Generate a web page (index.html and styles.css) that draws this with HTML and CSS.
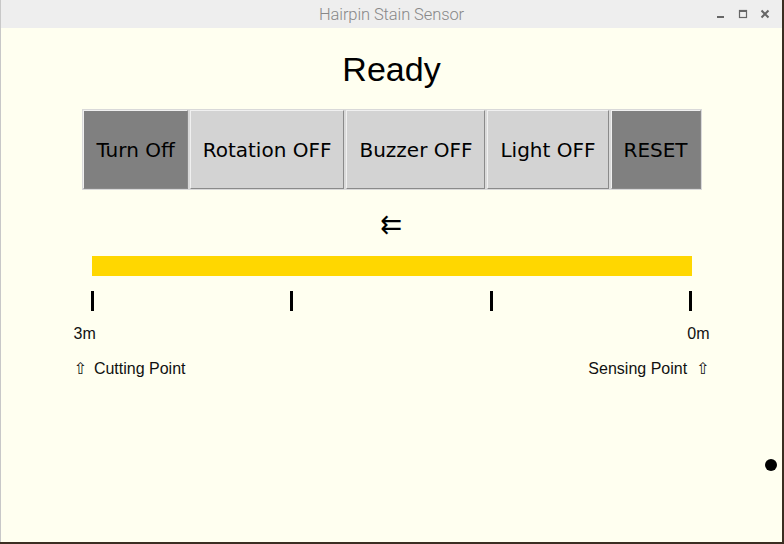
FILE: index.html
```html
<!DOCTYPE html>
<html>
<head>
<meta charset="utf-8">
<link rel="stylesheet" href="styles.css">
</head>
<body>
<div class="window">
  <div class="titlebar">
    <div class="title">Hairpin Stain Sensor</div>
    <div class="controls">
      <svg class="ctl" width="10" height="10" viewBox="0 0 10 10"><rect x="1" y="7" width="7" height="2" fill="#666"/></svg>
      <svg class="ctl" width="10" height="10" viewBox="0 0 10 10"><rect x="1.5" y="1.5" width="7" height="7" fill="none" stroke="#666" stroke-width="1.2"/><rect x="1" y="1" width="8" height="2" fill="#666"/></svg>
      <svg class="ctl" width="10" height="10" viewBox="0 0 10 10"><path d="M1.5 1.5 L8.5 8.5 M8.5 1.5 L1.5 8.5" stroke="#666" stroke-width="2"/></svg>
    </div>
  </div>
  <div class="content">
    <div class="status">Ready</div>
    <div class="buttons">
      <button class="btn dark">Turn Off</button>
      <button class="btn">Rotation OFF</button>
      <button class="btn">Buzzer OFF</button>
      <button class="btn">Light OFF</button>
      <button class="btn dark">RESET</button>
    </div>
    <div class="arrow">⇇</div>
    <div class="bar"></div>
    <div class="ticks">
      <span class="tick"></span><span class="tick"></span><span class="tick"></span><span class="tick"></span>
    </div>
    <div class="labels">
      <span>3m</span><span>0m</span>
    </div>
    <div class="points">
      <span><span class="up">⇧</span>Cutting Point</span>
      <span>Sensing Point<span class="up right">⇧</span></span>
    </div>
    <div class="dot"></div>
  </div>
</div>
</body>
</html>
```
FILE: styles.css
```css
html, body {
  margin: 0;
  padding: 0;
}
body {
  width: 784px;
  height: 544px;
  background: #3b2e22;
  overflow: hidden;
}
.window {
  width: 782px;
  height: 542px;
  background: #fffff0;
  border-left: 1px solid #c8c8c8;
  box-sizing: border-box;
  display: flex;
  flex-direction: column;
}
.titlebar {
  height: 28px;
  background: #eeeeee;
  position: relative;
  display: flex;
  align-items: center;
  justify-content: center;
  flex-shrink: 0;
}
.title {
  font-family: Roboto, "Liberation Sans", sans-serif;
  font-weight: 300;
  font-size: 16.5px;
  color: #888888;
  letter-spacing: -0.1px;
}
.controls {
  position: absolute;
  right: 12px;
  top: 9px;
  display: flex;
  gap: 12px;
}
.ctl {
  display: block;
}
.content {
  flex: 1;
  position: relative;
  display: flex;
  flex-direction: column;
  align-items: center;
}
.status {
  margin-top: 22px;
  font-family: "Liberation Sans", Arial, sans-serif;
  font-size: 34px;
  line-height: 38px;
  color: #000;
}
.buttons {
  margin-top: 22px;
  display: flex;
  height: 79px;
  margin-left: 1px;
}
.btn {
  font-family: "DejaVu Sans", sans-serif;
  font-size: 20px;
  color: #000;
  background: #d3d3d3;
  border: 1px solid;
  border-color: #f0f0f0 #8a8a8a #8a8a8a #f0f0f0;
  outline: 1px solid #d9d9d9;
  padding: 0 12px;
  margin: 0;
}
.btn + .btn {
  margin-left: 2px;
}
.btn.dark {
  background: #808080;
}
.arrow {
  margin-top: 21px;
  font-family: "DejaVu Sans", sans-serif;
  font-size: 26px;
  line-height: 28px;
  color: #000;
}
.bar {
  margin-top: 18px;
  width: 600px;
  height: 20px;
  background: #ffd700;
}
.ticks {
  margin-top: 15px;
  width: 601px;
  display: flex;
  justify-content: space-between;
}
.tick {
  width: 3px;
  height: 20px;
  background: #000;
}
.labels, .points {
  width: 636px;
  display: flex;
  justify-content: space-between;
  font-family: "Liberation Sans", Arial, sans-serif;
  font-size: 16px;
  line-height: 18px;
  color: #111;
}
.labels {
  margin-top: 14px;
}
.points {
  margin-top: 17px;
}
.up {
  font-family: "DejaVu Sans", sans-serif;
  font-size: 16px;
  margin-right: 7px;
}
.up.right {
  margin-right: 0;
  margin-left: 9px;
}
.dot {
  position: absolute;
  left: 764px;
  top: 431px;
  width: 12px;
  height: 12px;
  border-radius: 50%;
  background: #000;
}
```
